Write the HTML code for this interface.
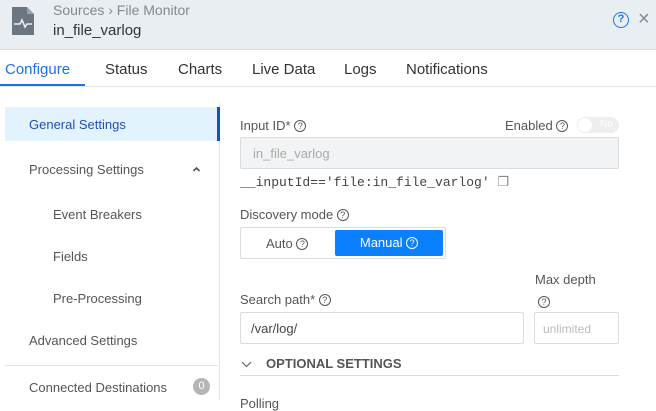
<!DOCTYPE html>
<html><head><style>
*{box-sizing:border-box;margin:0;padding:0}
body{width:656px;height:400px;overflow:hidden;background:#fff;font-family:"Liberation Sans",sans-serif;color:#333;position:relative}
.a{position:absolute;white-space:nowrap}
.q{display:inline-block;width:12px;height:12px;border:1px solid #555;border-radius:50%;font-size:9px;line-height:10px;text-align:center;vertical-align:1px;color:#555}
</style></head><body>
<div class="a" style="left:0;top:0;width:656px;height:50px;background:#e9eef3;border-bottom:1px solid #d5dbe0"></div>
<svg class="a" style="left:10px;top:5px" width="26" height="32" viewBox="0 0 26 32"><path d="M2 2h15l7 7v21H2z" fill="#6b7680"/><path d="M17 2v7h7" fill="#9aa3ab"/><path d="M4 19h6l2-4 3 7 2-3h5" stroke="#e9eef3" stroke-width="1.6" fill="none"/></svg>
<div class="a" style="left:53px;top:2px;font-size:14px;color:#888">Sources › File Monitor</div>
<div class="a" style="left:53px;top:22px;font-size:15px;color:#333">in_file_varlog</div>
<div class="a" style="left:613px;top:12px;width:16px;height:16px;border:1.5px solid #1a73e8;border-radius:50%;color:#1a73e8;font-size:11px;line-height:13px;text-align:center;font-weight:bold">?</div>
<div class="a" style="left:638px;top:8px;font-size:20px;color:#888">×</div>
<div class="a" style="left:5px;top:61px;font-size:15px;color:#1a73e8">Configure</div>
<div class="a" style="left:0;top:84px;width:85px;height:3px;background:#1a73e8"></div>
<div class="a" style="left:105px;top:61px;font-size:15px">Status</div>
<div class="a" style="left:178px;top:61px;font-size:15px">Charts</div>
<div class="a" style="left:252px;top:61px;font-size:15px">Live Data</div>
<div class="a" style="left:344px;top:61px;font-size:15px">Logs</div>
<div class="a" style="left:406px;top:61px;font-size:15px">Notifications</div>
<div class="a" style="left:0;top:86px;width:656px;height:1px;background:#e2e6ea"></div>
<div class="a" style="left:219px;top:103px;width:1px;height:297px;background:#e2e6ea"></div>
<div class="a" style="left:5px;top:107px;width:212px;height:34px;background:#e3f3fd"></div>
<div class="a" style="left:217px;top:107px;width:3px;height:34px;background:#0b57c4"></div>
<div class="a" style="left:29px;top:117px;font-size:13px;color:#1f4fb5">General Settings</div>
<div class="a" style="left:29px;top:162px;font-size:13px;color:#555">Processing Settings</div>
<svg class="a" style="left:192px;top:166px" width="9" height="6" viewBox="0 0 9 6"><path d="M1.5 5l3-3 3 3" stroke="#555" stroke-width="1.6" fill="none"/></svg>
<div class="a" style="left:53px;top:207px;font-size:13px;color:#555">Event Breakers</div>
<div class="a" style="left:53px;top:249px;font-size:13px;color:#555">Fields</div>
<div class="a" style="left:53px;top:291px;font-size:13px;color:#555">Pre-Processing</div>
<div class="a" style="left:29px;top:333px;font-size:13px;color:#555">Advanced Settings</div>
<div class="a" style="left:5px;top:365px;width:213px;height:1px;background:#e2e6ea"></div>
<div class="a" style="left:29px;top:380px;font-size:13px;color:#555">Connected Destinations</div>
<div class="a" style="left:193px;top:378px;width:17px;height:17px;border-radius:50%;background:#b5b5b5;color:#fff;font-size:11px;text-align:center;line-height:17px">0</div>
<div class="a" style="left:240px;top:118px;font-size:13px;color:#555">Input ID* <span class="q">?</span></div>
<div class="a" style="left:505px;top:118px;font-size:13px;color:#555">Enabled <span class="q">?</span></div>
<div class="a" style="left:577px;top:117px;width:42px;height:16px;border-radius:8px;background:#eee"><div style="position:absolute;left:1px;top:1px;width:14px;height:14px;border-radius:50%;background:#fff"></div><span style="position:absolute;left:23px;top:2px;font-size:10px;color:#fff">No</span></div>
<div class="a" style="left:240px;top:137px;width:379px;height:32px;background:#f2f3f4;border:1px solid #d9dde1;border-radius:2px;font-size:13px;color:#aaa;padding:8px 12px">in_file_varlog</div>
<div class="a" style="left:240px;top:175px;font-family:'Liberation Mono',monospace;font-size:13px;color:#444">__inputId=='file:in_file_varlog' <span style="color:#888">❐</span></div>
<div class="a" style="left:240px;top:207px;font-size:13px;color:#555">Discovery mode <span class="q">?</span></div>
<div class="a" style="left:240px;top:227px;width:206px;height:32px;border:1px solid #d9dde1;border-radius:2px"></div>
<div class="a" style="left:266px;top:236px;font-size:13px;color:#555">Auto <span class="q">?</span></div>
<div class="a" style="left:335px;top:230px;width:108px;height:26px;background:#0a80ff;border-radius:2px;color:#fff;font-size:13px;text-align:center;line-height:26px">Manual <span class="q" style="border-color:#fff;color:#fff">?</span></div>
<div class="a" style="left:535px;top:272px;font-size:13px;color:#555">Max depth</div>
<div class="a" style="left:538px;top:293px"><span class="q">?</span></div>
<div class="a" style="left:240px;top:292px;font-size:13px;color:#555">Search path* <span class="q">?</span></div>
<div class="a" style="left:240px;top:312px;width:284px;height:32px;border:1px solid #d9dde1;border-radius:2px;font-size:13px;color:#444;padding:8px 10px">/var/log/</div>
<div class="a" style="left:534px;top:312px;width:85px;height:32px;border:1px solid #d9dde1;border-radius:2px;font-size:12px;color:#bbb;padding:9px 8px">unlimited</div>
<svg class="a" style="left:241px;top:361px" width="11" height="7" viewBox="0 0 11 7"><path d="M1 1l4.5 4.5L10 1" stroke="#666" stroke-width="1.2" fill="none"/></svg>
<div class="a" style="left:266px;top:356px;font-size:13px;color:#555;font-weight:bold">OPTIONAL SETTINGS</div>
<div class="a" style="left:240px;top:375px;width:379px;height:1px;background:#d9dde1"></div>
<div class="a" style="left:240px;top:396px;font-size:13px;color:#555">Polling</div>
</body></html>
